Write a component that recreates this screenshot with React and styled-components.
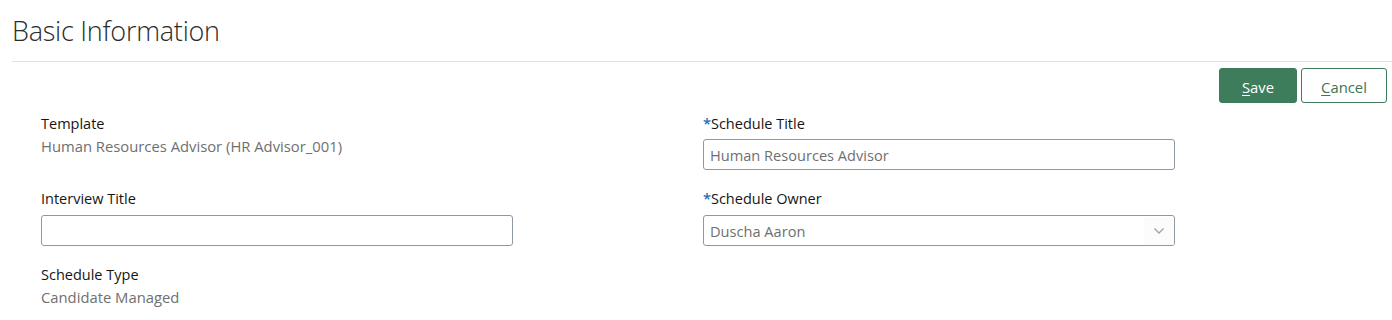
import React from "react";
import styled, { createGlobalStyle } from "styled-components";

const Global = createGlobalStyle`
  html, body { margin: 0; padding: 0; background: #fff; }
  body { font-family: "Open Sans", "Noto Sans", sans-serif; color: #161513; }
  * { box-sizing: border-box; }
`;

const Page = styled.div`
  width: 1392px;
  padding: 0 0 0 12px;
`;

const Header = styled.div`
  height: 62px;
  border-bottom: 1px solid #dde2e8;
  display: flex;
  align-items: flex-start;
`;

const Title = styled.h1`
  margin: 14px 0 0 0;
  font-size: 27px;
  font-weight: 300;
  line-height: 34px;
  color: #2b2b2b;
  letter-spacing: -0.25px;
`;

const Toolbar = styled.div`
  display: flex;
  justify-content: flex-end;
  gap: 4px;
  padding: 6px 5px 0 0;
`;

const Button = styled.button`
  height: 35px;
  min-width: ${(p) => p.$w}px;
  border-radius: 3px;
  font-family: inherit;
  font-size: 14.8px;
  padding: 3px 0 0 0;
  cursor: pointer;
  border: 1px solid #3d7b5b;
  background: ${(p) => (p.$primary ? "#3d7d5c" : "#fff")};
  color: ${(p) => (p.$primary ? "#fff" : "#3a7656")};
  u { text-underline-offset: 2px; }
`;

const Form = styled.div`
  display: grid;
  grid-template-columns: 472px 472px;
  column-gap: 190px;
  row-gap: 19px;
  padding: 11px 0 0 29px;
`;

const Field = styled.div`
  display: flex;
  flex-direction: column;
`;

const Label = styled.div`
  font-size: 14.5px;
  line-height: 20px;
  color: #161513;
`;

const Req = styled.span`
  color: #1f6bb8;
  font-weight: 600;
`;

const Value = styled.div`
  font-size: 14.8px;
  line-height: 24px;
  color: #6f6f6f;
`;

const Input = styled.div`
  margin-top: ${(p) => p.$mt || 5}px;
  height: 31px;
  border: 1px solid #8d99a5;
  border-radius: 3px;
  display: flex;
  align-items: center;
  font-size: 14.6px;
  color: #6f6f6f;
  padding: 1px 0 0 6px;
  overflow: hidden;
`;

const InputText = styled.span`
  flex: 1;
`;

const Chevron = styled.span`
  width: 30px;
  height: 100%;
  display: flex;
  align-items: center;
  justify-content: center;
  background: #fcfcfd;
`;

export default function App() {
  return (
    <>
      <Global />
      <Page>
        <Header>
          <Title>Basic Information</Title>
        </Header>
        <Toolbar>
          <Button $primary $w={78}>
            <u>S</u>ave
          </Button>
          <Button $w={86}>
            <u>C</u>ancel
          </Button>
        </Toolbar>
        <Form>
          <Field>
            <Label>Template</Label>
            <Value>Human Resources Advisor (HR Advisor_001)</Value>
          </Field>
          <Field>
            <Label>
              <Req>*</Req>Schedule Title
            </Label>
            <Input>
              <InputText>Human Resources Advisor</InputText>
            </Input>
          </Field>
          <Field>
            <Label>Interview Title</Label>
            <Input $mt={6} />
          </Field>
          <Field>
            <Label>
              <Req>*</Req>Schedule Owner
            </Label>
            <Input $mt={6}>
              <InputText>Duscha Aaron</InputText>
              <Chevron>
                <svg width="12" height="8" viewBox="0 0 12 8">
                  <path d="M1.5 1.5 L6 6 L10.5 1.5" fill="none" stroke="#9aa3ad" strokeWidth="1.3" />
                </svg>
              </Chevron>
            </Input>
          </Field>
          <Field>
            <Label>Schedule Type</Label>
            <Value>Candidate Managed</Value>
          </Field>
        </Form>
      </Page>
    </>
  );
}
